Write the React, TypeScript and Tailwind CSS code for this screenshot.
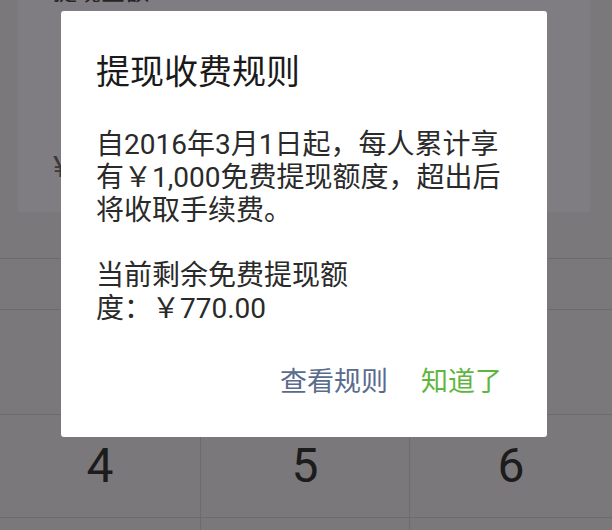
import React from "react";

const font = "font-['Roboto','Noto_Sans_CJK_SC',sans-serif]";

function KeyRow({ keys, className }: { keys: string[]; className: string }) {
  return (
    <div className={`grid grid-cols-[200px_209px_1fr] border-b border-[#6d6b6f] ${className}`}>
      {keys.map((k, i) => (
        <div
          key={i}
          className={`flex items-center justify-center text-[48px] text-[#1c1c1c] ${
            i > 0 ? "border-l border-[#6d6b6f]" : ""
          }`}
        >
          {k}
        </div>
      ))}
    </div>
  );
}

export default function App() {
  return (
    <div className={`relative h-[530px] w-[612px] overflow-hidden bg-[#7a787b] ${font}`}>
      {/* dimmed page behind the dialog */}
      <div className="ml-[18px] flex h-[212px] w-[572px] flex-col bg-[#7f7d81] pl-[35px]">
        <p className="-mt-[22px] text-[24px] leading-[28px] text-[#262626]">提现金额</p>
        <p className="mt-[144px] text-[30px] leading-[34px] text-[#3a393b]">¥</p>
      </div>

      <div className="mt-[46px] border-t border-[#6d6b6f]">
        <div className="h-[51px] border-b border-[#6d6b6f]" />
        <KeyRow keys={["1", "2", "3"]} className="h-[105px]" />
        <KeyRow keys={["4", "5", "6"]} className="h-[103px]" />
        <KeyRow keys={["", "", ""]} className="h-[100px]" />
      </div>

      {/* dialog */}
      <div className="absolute left-[61px] top-[11px] h-[426px] w-[486px] rounded-[3px] bg-white pl-[35px] pr-[45px] pt-[41px]">
        <h2 className="text-[34px] leading-[40px] font-normal text-[#1a1a1a]">提现收费规则</h2>
        <p className="mt-[36px] text-[28px] leading-[33px] text-[#2a2a2a]">
          自2016年3月1日起，每人累计享
          <br />
          有￥1,000免费提现额度，超出后
          <br />
          将收取手续费。
        </p>
        <p className="mt-[32px] text-[28px] leading-[33px] text-[#2a2a2a]">
          当前剩余免费提现额
          <br />
          度：￥770.00
        </p>
        <div className="mt-[41px] flex justify-end gap-[33px] text-[27px] leading-[33px]">
          <button type="button" className="text-[#5a6b8d]">
            查看规则
          </button>
          <button type="button" className="text-[#5fb63f]">
            知道了
          </button>
        </div>
      </div>
    </div>
  );
}
